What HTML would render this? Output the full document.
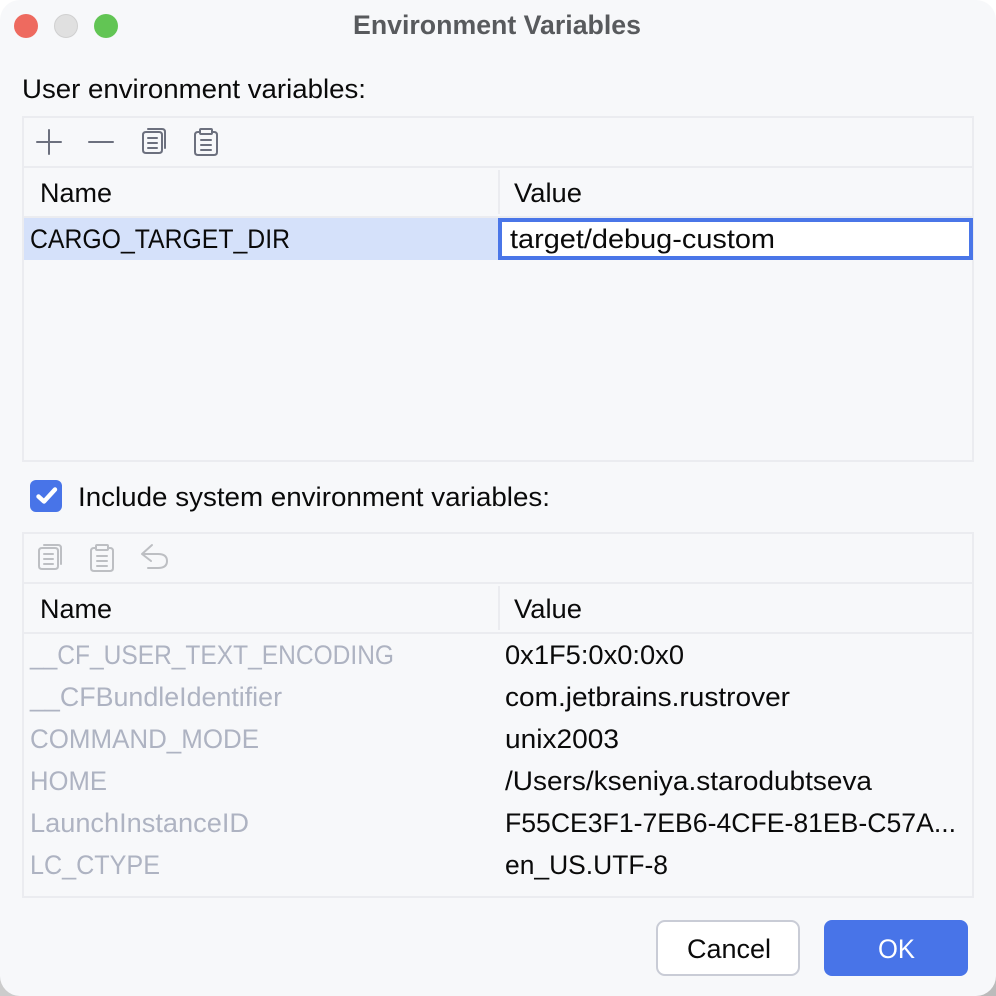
<!DOCTYPE html>
<html><head><meta charset="utf-8"><title>Environment Variables</title>
<style>
html,body{margin:0;padding:0;background:#f7f8fa;width:996px;height:996px;overflow:hidden}
svg{display:block}
text{font-family:"Liberation Sans",sans-serif;font-size:27px;fill:#0a0a0a}
.g{fill:#aeb3c2}
.i{fill:none;stroke:#6c707e;stroke-width:2;stroke-linecap:round;stroke-linejoin:round}
.d{stroke:#bdbfc3}
</style></head><body>
<svg width="996" height="996" viewBox="0 0 996 996" xmlns="http://www.w3.org/2000/svg">
<rect width="996" height="996" fill="#f7f8fa"/>
<path d="M0 20V0H20A20 20 0 0 0 0 20Z" fill="#fff"/>
<path d="M976 0H996V20A20 20 0 0 0 976 0Z" fill="#fff"/>
<path d="M996 976V996H976A20 20 0 0 0 996 976Z" fill="#bbb"/>
<path d="M0 976V996H20A20 20 0 0 1 0 976Z" fill="#ccc"/>

<circle cx="26" cy="26" r="12" fill="#ee6a5f"/>
<circle cx="66" cy="26" r="11.5" fill="#e0e0e0" stroke="#d0d0d0"/>
<circle cx="106" cy="26" r="12" fill="#62c554"/>
<text x="353" y="34" textLength="288" lengthAdjust="spacingAndGlyphs" style="fill:#585a5d;font-weight:700">Environment Variables</text>

<text x="22" y="98" textLength="344" lengthAdjust="spacingAndGlyphs">User environment variables:</text>

<!-- panel 1 -->
<rect x="23" y="117" width="950" height="344" fill="#f7f8fa" stroke="#ebecf0" stroke-width="2"/>
<rect x="24" y="166" width="948" height="2" fill="#ebecf0"/>
<rect x="24" y="216" width="948" height="2" fill="#ebecf0"/>
<rect x="498" y="170" width="2" height="44" fill="#ebecf0"/>
<path class="i" d="M37 142H61M49 130V154M89 142H113"/>
<path class="i" d="M146 132H159Q162 132 162 135V150Q162 153 159 153H146Q143 153 143 150V135Q143 132 146 132Z"/>
<path class="i" d="M148 129H162Q165 129 165 132V148"/>
<path class="i" d="M148 138H157M148 143H157M148 148H157"/>
<path class="i" d="M200 132H198Q195 132 195 135V152Q195 155 198 155H214Q217 155 217 152V135Q217 132 214 132H212"/>
<path class="i" d="M201 129H211Q212 129 212 130V133Q212 134 211 134H201Q200 134 200 133V130Q200 129 201 129Z"/>
<path class="i" d="M201 140H211M201 145H211M201 150H211"/>
<text x="40" y="202" textLength="72" lengthAdjust="spacingAndGlyphs">Name</text>
<text x="514" y="202" textLength="68" lengthAdjust="spacingAndGlyphs">Value</text>
<rect x="24" y="218" width="474" height="42" fill="#d5e1fa"/>
<text x="30" y="248" textLength="260" lengthAdjust="spacingAndGlyphs">CARGO_TARGET_DIR</text>
<rect x="500" y="220" width="471" height="38" fill="#fff" stroke="#4a76e8" stroke-width="4"/>
<text x="510" y="248" textLength="265" lengthAdjust="spacingAndGlyphs">target/debug-custom</text>

<!-- checkbox -->
<rect x="30" y="480" width="32" height="32" rx="6" fill="#4874e8"/>
<path d="M38.5 496.5L44 501.5L55 489.5" fill="none" stroke="#fff" stroke-width="4.4" stroke-linecap="round" stroke-linejoin="round"/>
<text x="78" y="506" textLength="472" lengthAdjust="spacingAndGlyphs">Include system environment variables:</text>

<!-- panel 2 -->
<rect x="23" y="533" width="950" height="364" fill="#f7f8fa" stroke="#ebecf0" stroke-width="2"/>
<rect x="24" y="582" width="948" height="2" fill="#ebecf0"/>
<rect x="24" y="632" width="948" height="2" fill="#ebecf0"/>
<rect x="498" y="586" width="2" height="44" fill="#ebecf0"/>
<path class="i d" d="M42 548H55Q58 548 58 551V566Q58 569 55 569H42Q39 569 39 566V551Q39 548 42 548Z"/>
<path class="i d" d="M44 545H58Q61 545 61 548V564"/>
<path class="i d" d="M44 554H53M44 559H53M44 564H53"/>
<path class="i d" d="M96 548H94Q91 548 91 551V568Q91 571 94 571H110Q113 571 113 568V551Q113 548 110 548H108"/>
<path class="i d" d="M97 545H107Q108 545 108 546V549Q108 550 107 550H97Q96 550 96 549V546Q96 545 97 545Z"/>
<path class="i d" d="M97 556H107M97 561H107M97 566H107"/>
<path class="i d" d="M152 545L142 554L151 561M142 554H158Q167 554 167 561Q167 568 158 568H148"/>
<text x="40" y="618" textLength="72" lengthAdjust="spacingAndGlyphs">Name</text>
<text x="514" y="618" textLength="68" lengthAdjust="spacingAndGlyphs">Value</text>

<text class="g" x="30" y="664" textLength="364" lengthAdjust="spacingAndGlyphs">__CF_USER_TEXT_ENCODING</text>
<text class="g" x="30" y="706" textLength="252" lengthAdjust="spacingAndGlyphs">__CFBundleIdentifier</text>
<text class="g" x="30" y="748" textLength="229" lengthAdjust="spacingAndGlyphs">COMMAND_MODE</text>
<text class="g" x="30" y="790" textLength="77" lengthAdjust="spacingAndGlyphs">HOME</text>
<text class="g" x="30" y="832" textLength="219" lengthAdjust="spacingAndGlyphs">LaunchInstanceID</text>
<text class="g" x="30" y="874" textLength="130" lengthAdjust="spacingAndGlyphs">LC_CTYPE</text>

<text x="505" y="664" textLength="179" lengthAdjust="spacingAndGlyphs">0x1F5:0x0:0x0</text>
<text x="505" y="706" textLength="285" lengthAdjust="spacingAndGlyphs">com.jetbrains.rustrover</text>
<text x="505" y="748" textLength="114" lengthAdjust="spacingAndGlyphs">unix2003</text>
<text x="505" y="790" textLength="367" lengthAdjust="spacingAndGlyphs">/Users/kseniya.starodubtseva</text>
<text x="505" y="832" textLength="451" lengthAdjust="spacingAndGlyphs">F55CE3F1-7EB6-4CFE-81EB-C57A...</text>
<text x="505" y="874" textLength="163" lengthAdjust="spacingAndGlyphs">en_US.UTF-8</text>

<!-- buttons -->
<rect x="657" y="921" width="142" height="54" rx="8" fill="#fff" stroke="#c9ccd6" stroke-width="2"/>
<text x="687" y="958" textLength="84" lengthAdjust="spacingAndGlyphs">Cancel</text>
<rect x="824" y="920" width="144" height="56" rx="8" fill="#4874e8"/>
<text x="878" y="958" textLength="37" lengthAdjust="spacingAndGlyphs" style="fill:#fff">OK</text>
</svg>
</body></html>
